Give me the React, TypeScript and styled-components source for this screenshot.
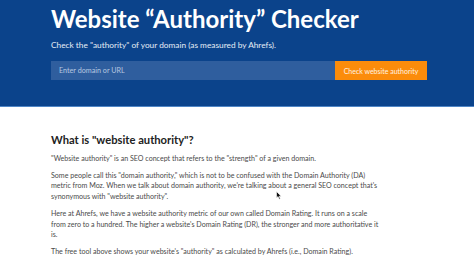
import React from "react";
import styled, { createGlobalStyle } from "styled-components";

const Global = createGlobalStyle`
  html, body { margin: 0; padding: 0; background: #fff; }
  body { font-family: Lato, "Open Sans", sans-serif; overflow: hidden; }
`;

const Page = styled.div`
  position: relative;
  width: 474px;
  height: 276px;
  overflow: hidden;
`;

const Hero = styled.header`
  background: #0b438b;
  border-bottom: 1px solid #4f86c6;
  height: 107px;
  box-sizing: border-box;
  padding: 4px 0 0 51px;
`;

const Title = styled.h1`
  margin: 0;
  font-size: 24px;
  line-height: 30px;
  font-weight: 700;
  color: #fff;
`;

const Subtitle = styled.p`
  margin: 5px 0 0;
  font-size: 8.3px;
  line-height: 12px;
  color: #e6edf6;
`;

const Form = styled.div`
  display: flex;
  width: 376px;
  height: 19px;
  margin-top: 10px;
`;

const Input = styled.div`
  flex: 1;
  background: #2f5e9e;
  color: #b7c8e0;
  font-size: 7.2px;
  display: flex;
  align-items: center;
  padding-left: 8px;
`;

const Button = styled.div`
  width: 92px;
  background: #fb8c0b;
  color: #fff3e2;
  font-size: 7px;
  display: flex;
  align-items: center;
  justify-content: center;
`;

const Content = styled.main`
  padding: 25px 0 0 51px;
  width: 328px;
`;

const Heading = styled.h2`
  margin: 0 0 5.6px;
  font-size: 11.2px;
  line-height: 16px;
  font-weight: 700;
  color: #222;
`;

const Para = styled.p`
  margin: 0 0 6.3px;
  font-size: 7.1px;
  line-height: 10.7px;
  color: #4a4a4a;
`;

const Cursor = styled.svg`
  position: absolute;
  left: 276px;
  top: 191px;
`;

export default function App() {
  return (
    <Page>
      <Global />
      <Hero>
        <Title>Website “Authority” Checker</Title>
        <Subtitle>Check the "authority" of your domain (as measured by Ahrefs).</Subtitle>
        <Form>
          <Input>Enter domain or URL</Input>
          <Button>Check website authority</Button>
        </Form>
      </Hero>
      <Content>
        <Heading>What is "website authority"?</Heading>
        <Para>"Website authority" is an SEO concept that refers to the "strength" of a given domain.</Para>
        <Para>
          Some people call this "domain authority," which is not to be confused with the Domain Authority (DA)
          metric from Moz. When we talk about domain authority, we're talking about a general SEO concept that's
          synonymous with "website authority".
        </Para>
        <Para>
          Here at Ahrefs, we have a website authority metric of our own called Domain Rating. It runs on a scale
          from zero to a hundred. The higher a website's Domain Rating (DR), the stronger and more authoritative it
          is.
        </Para>
        <Para>The free tool above shows your website's "authority" as calculated by Ahrefs (i.e., Domain Rating).</Para>
      </Content>
      <Cursor width="6" height="9" viewBox="0 0 6 9">
        <path d="M0.5 0.5 L0.5 7 L2 5.6 L3.3 8.3 L4.3 7.8 L3.1 5.2 L5.2 5.2 Z" fill="#111" stroke="#fff" strokeWidth="0.6" />
      </Cursor>
    </Page>
  );
}
